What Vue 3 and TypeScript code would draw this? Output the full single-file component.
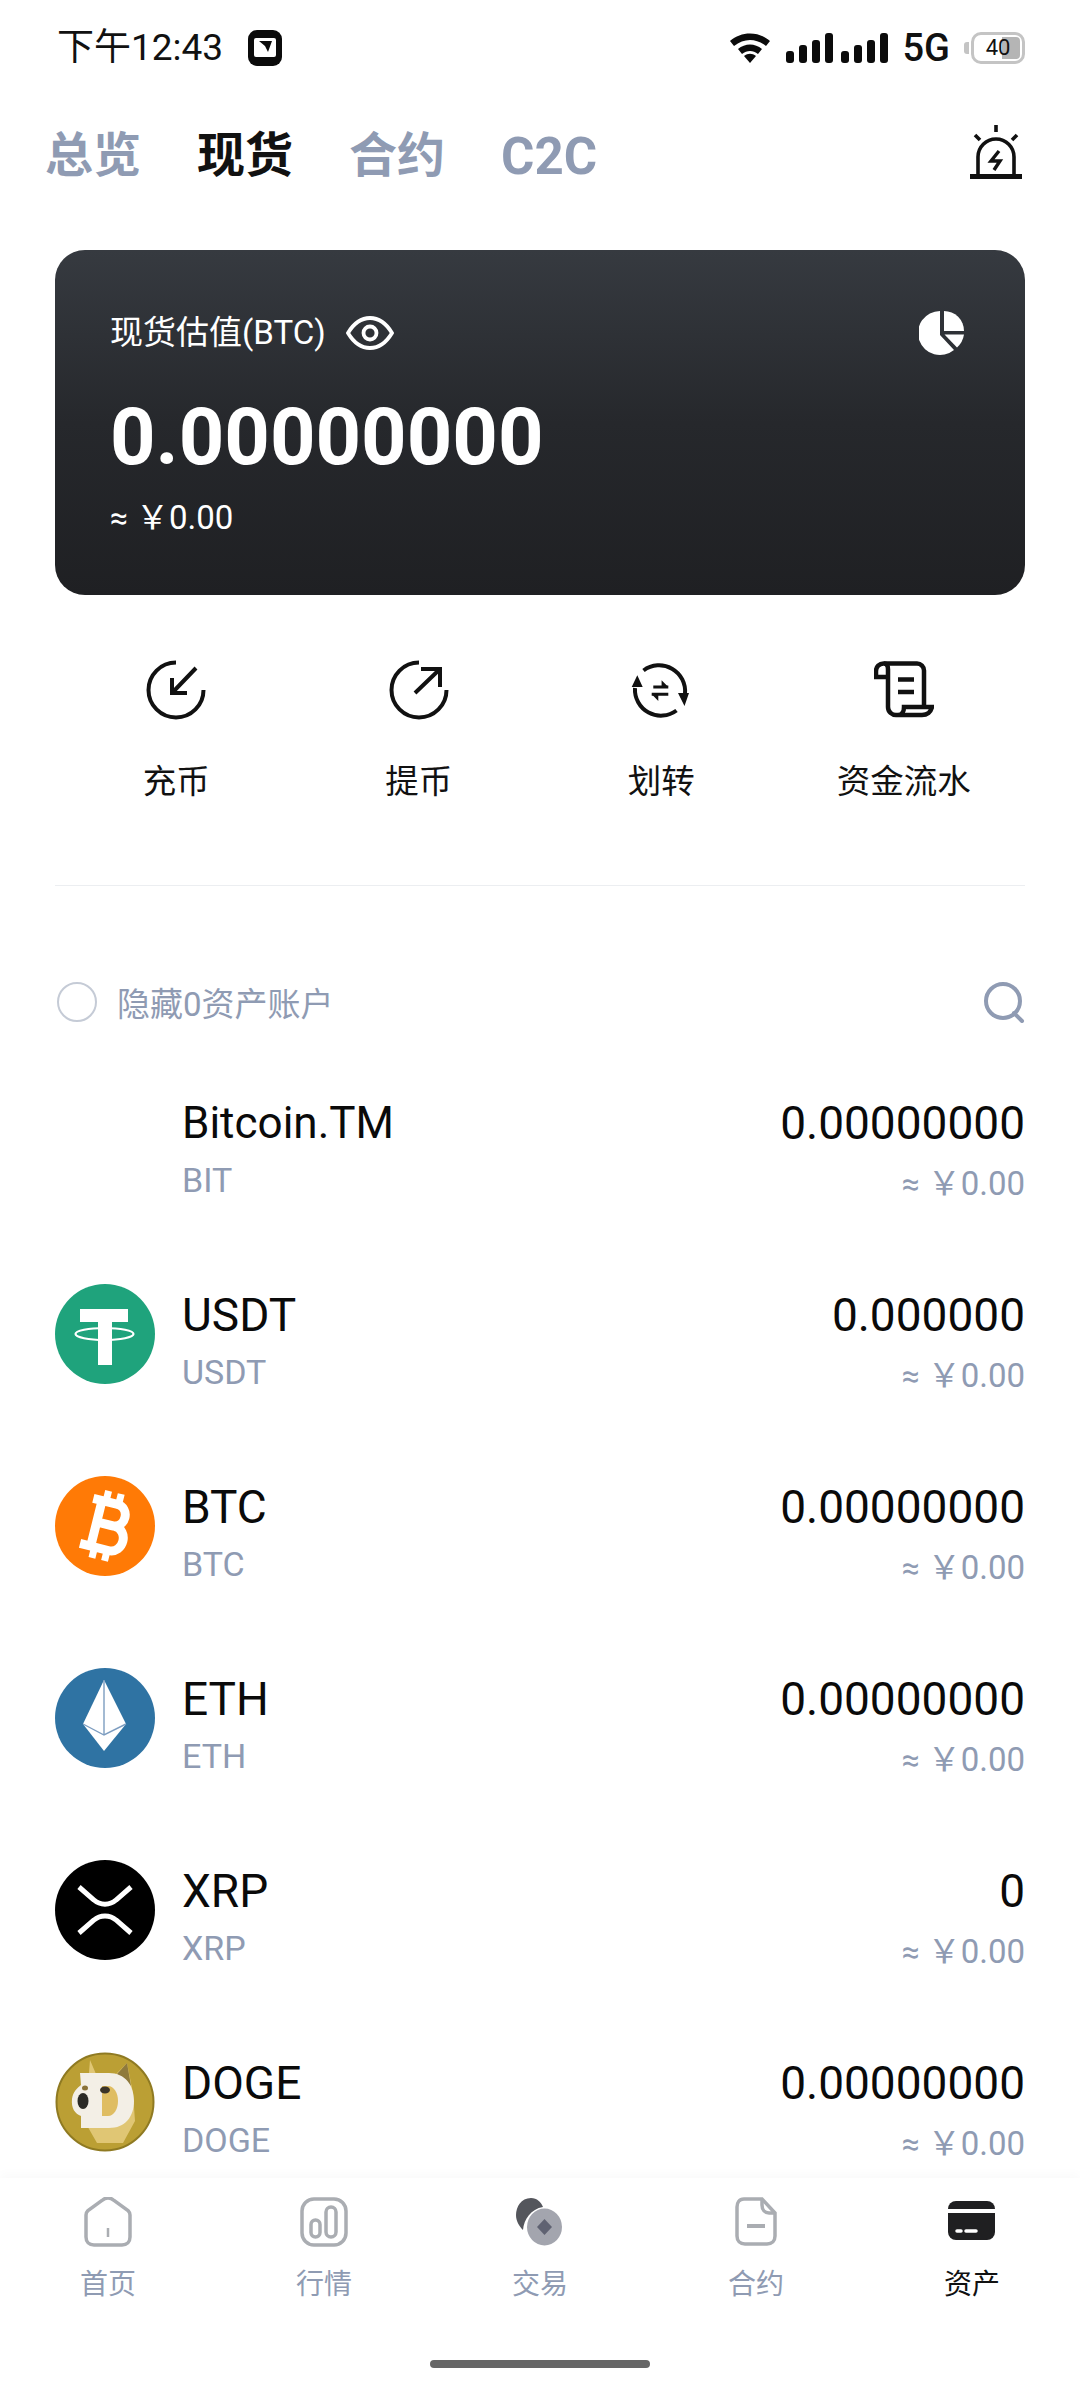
<script setup lang="ts">
interface Asset {
  name: string
  code: string
  amount: string
  icon: string
}

const tabs = ['总览', '现货', '合约', 'C2C']
const actions = ['充币', '提币', '划转', '资金流水']
const assets: Asset[] = [
  { name: 'Bitcoin.TM', code: 'BIT', amount: '0.00000000', icon: 'none' },
  { name: 'USDT', code: 'USDT', amount: '0.000000', icon: 'usdt' },
  { name: 'BTC', code: 'BTC', amount: '0.00000000', icon: 'btc' },
  { name: 'ETH', code: 'ETH', amount: '0.00000000', icon: 'eth' },
  { name: 'XRP', code: 'XRP', amount: '0', icon: 'xrp' },
  { name: 'DOGE', code: 'DOGE', amount: '0.00000000', icon: 'doge' },
]
const navItems = ['首页', '行情', '交易', '合约', '资产']
</script>

<template>
  <div class="page">
    <div class="status-bar">
      <div class="status-left">
        <span class="time">下午12:43</span>
        <svg width="36" height="38" viewBox="0 0 36 38">
          <rect x="1" y="1" width="34" height="36" rx="9" fill="#0b0b0b" />
          <rect x="7" y="9" width="22" height="19" rx="2" fill="#fff" />
          <path d="M12 12h13l-4 11-3-6z" fill="#0b0b0b" />
        </svg>
      </div>
      <div class="status-right">
        <svg width="42" height="32" viewBox="0 0 42 32">
          <path d="M1 9C12-1 30-1 41 9l-4 5C27 6 15 6 5 14z" fill="#0b0b0b" />
          <path d="M9 17c7-6 17-6 24 0l-4 5c-5-4-11-4-16 0z" fill="#0b0b0b" />
          <path d="M15 24c4-3 8-3 12 0l-6 7z" fill="#0b0b0b" />
        </svg>
        <div class="signal">
          <i style="height: 12px"></i><i style="height: 18px"></i><i style="height: 23px"></i><i style="height: 30px"></i>
          <i class="signal-gap" style="height: 12px"></i><i style="height: 18px"></i><i style="height: 23px"></i><i style="height: 30px"></i>
        </div>
        <span class="net">5G</span>
        <div class="battery">
          <span class="battery-cap"></span>
          <div class="battery-body">
            <span class="battery-fill"></span>
            <span class="battery-text">40</span>
          </div>
        </div>
      </div>
    </div>

    <div class="tabs">
      <span v-for="t in tabs" :key="t" class="tab" :class="{ 'tab--active': t === '现货', 'tab--latin': t === 'C2C' }">{{ t }}</span>
      <svg class="alarm" width="52" height="56" viewBox="0 0 52 56" fill="none" stroke="#111" stroke-width="3.600">
        <path d="M26 1v7M5 11l5 5M47 11l-5 5" />
        <path d="M8 50V33a18 18 0 0 1 36 0v17" />
        <path d="M0 52.500h52" stroke-width="5" />
        <path d="M29 27l-8 10h9l-6 9" stroke-width="3.400" />
      </svg>
    </div>

    <div class="card">
      <div class="card-top">
        <div class="card-label">
          <span>现货估值(BTC)</span>
          <svg width="48" height="34" viewBox="0 0 48 34" fill="none" stroke="#fff" stroke-width="3.800">
            <path d="M2 17C8 7 15 2 24 2s16 5 22 15c-6 10-13 15-22 15S8 27 2 17z" />
            <circle cx="24" cy="17" r="6.500" />
          </svg>
        </div>
        <svg width="46" height="46" viewBox="0 0 46 46">
          <path d="M21 1a22 22 0 1 0 14 39L21 25z" fill="#fff" />
          <path d="M25 1a20 20 0 0 1 20 20H25z" fill="#fff" />
          <path d="M25.500 24.500H45a22 22 0 0 1-7 13z" fill="#fff" />
        </svg>
      </div>
      <div class="card-amount">0.00000000</div>
      <div class="card-fiat"><span class="approx">≈</span>￥0.00</div>
    </div>

    <div class="actions">
      <div v-for="(a, i) in actions" :key="a" class="action">
        <svg width="60" height="60" viewBox="0 0 60 60" fill="none" stroke="#111" stroke-width="4">
          <template v-if="i === 0">
            <path d="M30 2.500A27.500 27.500 0 1 0 57.500 30" />
            <path d="M50 8L26 33M26 18v15h15" />
          </template>
          <template v-else-if="i === 1">
            <path d="M30 2.500A27.500 27.500 0 1 0 57.500 30" />
            <path d="M26 33L51 9M32 9h19v18" />
          </template>
          <template v-else-if="i === 2">
            <path d="M12.500 10.500A26 26 0 0 1 54 34" />
            <path d="M45.500 50.500A26 26 0 0 1 4 28" />
            <path d="M47 33h11l-4.500 13zM6.300 15.300L.7 27h11z" fill="#111" stroke="none" />
            <path d="M22.300 27h15M20.700 34.300h16.600" stroke-width="3" />
            <path d="M30.600 20.300l6.700 6.700h-6.700zM20.700 34.300h6.600V41z" fill="#111" stroke="none" />
          </template>
          <template v-else>
            <path d="M13 17H2v-6a7.500 7.500 0 0 1 7.500-7.500H43a7 7 0 0 1 7 7V47" stroke-width="4.500" />
            <path d="M10 3.500c3 0 4 3 4 6V47c0 5 4 8 8 8h26c5 0 9-3 10-8H30c0 4-2 8-6 8" stroke-width="4.500" />
            <path d="M24 19.500h16M24 32h16" stroke-width="4.500" />
          </template>
        </svg>
        <span>{{ a }}</span>
      </div>
    </div>

    <div class="divider"></div>

    <div class="filter">
      <div class="filter-left">
        <span class="radio"></span>
        <span>隐藏0资产账户</span>
      </div>
      <svg width="42" height="42" viewBox="0 0 42 42" fill="none" stroke="#8f9bb3" stroke-width="4">
        <circle cx="20" cy="20" r="17" />
        <path d="M31 32l8 8" stroke-linecap="round" />
      </svg>
    </div>

    <div class="list">
      <div v-for="a in assets" :key="a.name" class="row">
        <div class="coin">
          <svg v-if="a.icon === 'usdt'" width="100" height="100" viewBox="0 0 100 100">
            <circle cx="50" cy="50" r="50" fill="#1fa37c" />
            <path d="M25 25h48v13H57v43H43V38H25z" fill="#fff" />
            <ellipse cx="49.500" cy="50" rx="29" ry="6" fill="none" stroke="#fff" stroke-width="2.200" />
          </svg>
          <svg v-else-if="a.icon === 'btc'" width="100" height="100" viewBox="0 0 100 100">
            <circle cx="50" cy="50" r="50" fill="#ff7a06" />
            <g transform="rotate(14 50 50)" fill="none" stroke="#fff">
              <path d="M32 26h24c15 0 15 22 0 22H41M41 48h18c16 0 16 25 0 25H30M41 26v47" stroke-width="9" />
              <path d="M45 15v11M58 15v11M45 73v11M58 73v11" stroke-width="7" />
            </g>
          </svg>
          <svg v-else-if="a.icon === 'eth'" width="100" height="100" viewBox="0 0 100 100">
            <circle cx="50" cy="50" r="50" fill="#2f73a3" />
            <path d="M49 12L71 56 49 83 28 56z" fill="#fff" />
            <path d="M49 12v55M28 56l21 11 22-11" fill="none" stroke="#7d9dc0" stroke-width="1.400" />
          </svg>
          <svg v-else-if="a.icon === 'xrp'" width="100" height="100" viewBox="0 0 100 100">
            <circle cx="50" cy="50" r="50" fill="#000" />
            <path d="M24 27l15 13c6 5.500 16 5.500 22 0l15-13M24 73l15-13c6-5.500 16-5.500 22 0l15 13" fill="none" stroke="#fff" stroke-width="5" />
          </svg>
          <svg v-else-if="a.icon === 'doge'" width="100" height="100" viewBox="0 0 100 100">
            <circle cx="50" cy="50" r="48.500" fill="#bb9f34" stroke="#8f7a22" stroke-width="2" />
            <path d="M35 8l6 14h20l11-11 6 30 2 28-12 22H42L30 70z" fill="#e0c674" />
            <path d="M72 11L62 22l14 12z" fill="#8f7a3c" />
            <path d="M25 21h29c16 0 25 12 25 28 0 16-9 27-25 27H26V64c-6-2-10-8-9-17 1-7 5-11 9-14z" fill="#f3efe6" />
            <path d="M47 34h6c6 0 10 7 10 15s-4 15-10 15h-6z" fill="#dfbd62" />
            <ellipse cx="28" cy="49" rx="5.500" ry="8" fill="#2b2a26" />
            <ellipse cx="50" cy="38" rx="5" ry="3.500" fill="#3b3428" />
            <ellipse cx="30" cy="36" rx="3" ry="2.500" fill="#8a7238" />
          </svg>
        </div>
        <div class="row-name">
          <span class="name" :class="{ 'name--long': a.name.length > 6 }">{{ a.name }}</span>
          <span class="code">{{ a.code }}</span>
        </div>
        <div class="row-value">
          <span class="amount">{{ a.amount }}</span>
          <span class="fiat"><span class="approx">≈</span>￥0.00</span>
        </div>
      </div>
    </div>

    <div class="nav">
      <div class="nav-items">
        <div v-for="(n, i) in navItems" :key="n" class="nav-item" :class="{ 'nav-item--active': i === 4 }">
          <svg width="50" height="50" viewBox="0 0 50 50" fill="none" stroke="#aaadb2" stroke-width="3.500">
            <template v-if="i === 0">
              <path d="M3 18c0-2 .5-3 2-4.500L19 3.500c4-3.500 8-3.500 12 0l14 10c1.500 1.500 2 2.500 2 4.500v22c0 5-3 8-8 8H11c-5 0-8-3-8-8z" />
              <path d="M25 31v9" stroke-width="2.500" />
            </template>
            <template v-else-if="i === 1">
              <rect x="3" y="2" width="44" height="46" rx="12" />
              <rect x="12" y="23" width="9" height="17" rx="4.500" />
              <rect x="27" y="10" width="10" height="30" rx="5" />
            </template>
            <template v-else-if="i === 2">
              <path d="M16 1C6 1 1 10 1 18c0 6 3 11 7 15 1-11 8-21 20-23-2-5-6-9-12-9z" fill="#54565c" stroke="none" />
              <ellipse cx="29.500" cy="30" rx="17.500" ry="18.500" fill="#a3a5ae" stroke="none" />
              <path d="M29.500 22l7.500 8-7.500 8-7.500-8z" fill="#5f6272" stroke="none" />
            </template>
            <template v-else-if="i === 3">
              <path d="M31 2H13C8 2 6 6 6 10v29c0 5 3 8 8 8h22c5 0 8-3 8-8V16z" />
              <path d="M31 2v6c0 5 3 8 7 8h6" />
              <path d="M16 29h18" stroke-width="4" />
            </template>
            <template v-else>
              <rect x="1" y="4" width="47" height="39" rx="8" fill="#1f1f21" stroke="none" />
              <path d="M1 14h47" stroke="#fff" stroke-width="4" />
              <path d="M10 34h4M19 34h10" stroke="#fff" stroke-width="3.500" stroke-linecap="round" />
            </template>
          </svg>
          <span>{{ n }}</span>
        </div>
      </div>
      <div class="home-bar"></div>
    </div>
  </div>
</template>

<style scoped>
.page {
  width: 1080px;
  height: 2400px;
  display: flex;
  flex-direction: column;
  overflow: hidden;
  background: #fff;
  color: #111;
  font-family: Roboto, "Noto Sans CJK SC", sans-serif;
}

.status-bar {
  height: 95px;
  flex-shrink: 0;
  display: flex;
  align-items: center;
  justify-content: space-between;
  padding: 0 55px 0 57px;
}
.status-left {
  display: flex;
  align-items: center;
  gap: 24px;
}
.time {
  font-size: 37px;
  line-height: 1;
}
.status-right {
  display: flex;
  align-items: center;
}
.signal {
  display: flex;
  align-items: flex-end;
  gap: 5px;
  margin-left: 15px;
}
.signal i {
  width: 8px;
  border-radius: 3px;
  background: #0b0b0b;
}
.signal .signal-gap {
  margin-left: 3px;
}
.net {
  margin-left: 15px;
  font-size: 38px;
  font-weight: 500;
  line-height: 1;
}
.battery {
  display: flex;
  align-items: center;
  margin-left: 14px;
}
.battery-cap {
  width: 5px;
  height: 12px;
  margin-right: 2px;
  border-radius: 3px 0 0 3px;
  background: #c4c4c4;
}
.battery-body {
  position: relative;
  width: 54px;
  height: 32px;
  box-sizing: border-box;
  border: 3px solid #c4c4c4;
  border-radius: 10px;
  text-align: center;
  overflow: hidden;
}
.battery-fill {
  position: absolute;
  top: 2px;
  bottom: 2px;
  right: 2px;
  width: 18px;
  border-radius: 0 4px 4px 0;
  background: #b5b5b5;
}
.battery-text {
  position: relative;
  font-size: 22px;
  line-height: 26px;
  display: block;
}

.tabs {
  height: 122px;
  flex-shrink: 0;
  display: flex;
  align-items: center;
  gap: 56px;
  padding: 0 58px 0 45px;
}
.tab {
  font-size: 48px;
  font-weight: 700;
  line-height: 1;
  color: #8f9bb3;
}
.tab--active {
  color: #111;
}
.tab--latin {
  font-size: 51px;
}
.alarm {
  margin-left: auto;
  margin-top: -8px;
}

.card {
  flex-shrink: 0;
  height: 345px;
  margin: 33px 55px 0;
  box-sizing: border-box;
  padding: 60px 60px 0 55px;
  border-radius: 30px;
  background: linear-gradient(180deg, #363a40 0%, #26282c 50%, #1f2023 100%);
  color: #fff;
}
.card-top {
  display: flex;
  align-items: center;
  justify-content: space-between;
}
.card-label {
  display: flex;
  align-items: center;
  gap: 20px;
  font-size: 33px;
  line-height: 46px;
}
.card-amount {
  margin-top: 36px;
  font-size: 79.500px;
  font-weight: 700;
  line-height: 90px;
}
.card-fiat {
  margin-top: 16px;
  font-size: 33px;
  line-height: 40px;
}
.approx {
  font-size: 32px;
  margin-right: 8px;
}

.actions {
  flex-shrink: 0;
  display: grid;
  grid-template-columns: repeat(4, 1fr);
  margin: 65px 55px 0;
}
.action {
  display: flex;
  flex-direction: column;
  align-items: center;
  gap: 39px;
  font-size: 33.500px;
  line-height: 46px;
}

.divider {
  flex-shrink: 0;
  height: 1px;
  margin: 80px 55px 0;
  background: #eceef1;
}

.filter {
  flex-shrink: 0;
  height: 42px;
  margin: 95px 55px 0;
  display: flex;
  align-items: center;
  justify-content: space-between;
}
.filter-left {
  display: flex;
  align-items: center;
  gap: 20px;
  font-size: 33px;
  color: #8f9bb3;
}
.radio {
  width: 40px;
  height: 40px;
  margin-left: 2px;
  box-sizing: border-box;
  border: 2.500px solid #c5cbd6;
  border-radius: 50%;
}

.list {
  flex: 1;
  min-height: 0;
  overflow: hidden;
  padding: 69px 55px 0;
}
.row {
  height: 192px;
  display: flex;
  align-items: flex-start;
}
.coin {
  width: 100px;
  height: 100px;
  margin-right: 27px;
  flex-shrink: 0;
}
.coin svg {
  display: block;
}
.row-name,
.row-value {
  display: flex;
  flex-direction: column;
  margin-top: 2px;
}
.row-value {
  margin-left: auto;
  align-items: flex-end;
}
.name,
.amount {
  font-size: 46px;
  line-height: 58px;
  color: #0a0a0a;
}
.name--long {
  font-size: 44px;
}
.code,
.fiat {
  margin-top: 7px;
  font-size: 33px;
  line-height: 50px;
  color: #8f9bb3;
}
.code {
  margin-top: 3px;
  font-size: 34px;
}

.nav {
  flex-shrink: 0;
  height: 222px;
  box-sizing: border-box;
  background: #fff;
  box-shadow: 0 -4px 10px rgba(0, 0, 0, 0.025);
  position: relative;
}
.nav-items {
  display: grid;
  grid-template-columns: repeat(5, 1fr);
  padding-top: 19px;
}
.nav-item {
  display: flex;
  flex-direction: column;
  align-items: center;
  gap: 18px;
  font-size: 28px;
  line-height: 40px;
  color: #8f9bb3;
}
.nav-item--active {
  color: #111;
}
.home-bar {
  position: absolute;
  left: 430px;
  bottom: 32px;
  width: 220px;
  height: 8px;
  border-radius: 4px;
  background: #666;
}
</style>

<style>
html,
body {
  margin: 0;
  background: #fff;
}
</style>
